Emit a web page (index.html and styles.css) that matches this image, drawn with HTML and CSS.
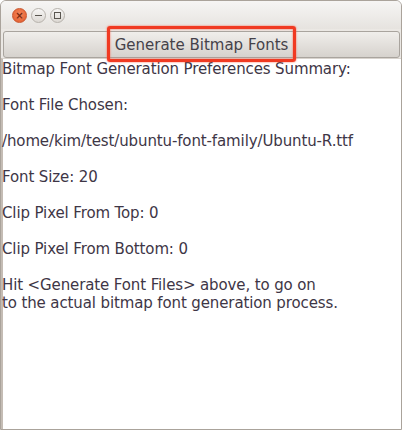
FILE: index.html
```html
<!DOCTYPE html>
<html>
<head>
<meta charset="utf-8">
<link rel="stylesheet" href="styles.css">
</head>
<body>
<div class="window">
  <div class="titlebar">
    <span class="wbtn close">×</span>
    <span class="wbtn min"><span class="dash"></span></span>
    <span class="wbtn max"><span class="sq"></span></span>
  </div>
  <div class="toolbar">
    <button class="gen"><span class="label">Generate Bitmap Fonts</span></button>
  </div>
  <div class="content">
    <p>Bitmap Font Generation Preferences Summary:</p>
    <p class="gap">Font File Chosen:</p>
    <p class="gap">/home/kim/test/ubuntu-font-family/Ubuntu-R.ttf</p>
    <p class="gap">Font Size: 20</p>
    <p class="gap">Clip Pixel From Top: 0</p>
    <p class="gap">Clip Pixel From Bottom: 0</p>
    <p class="gap">Hit &lt;Generate Font Files&gt; above, to go on<br>to the actual bitmap font generation process.</p>
  </div>
</div>
</body>
</html>
```
FILE: styles.css
```css
html, body {
  margin: 0;
  padding: 0;
  width: 402px;
  height: 430px;
  background: #ffffff;
  overflow: hidden;
}
.window {
  box-sizing: border-box;
  width: 402px;
  height: 430px;
  border: 1px solid #aaa39b;
  border-radius: 6px 6px 0 0;
  display: flex;
  flex-direction: column;
  background: #f2f1f0;
  overflow: hidden;
}
.titlebar {
  height: 28px;
  flex: none;
  display: flex;
  align-items: center;
  gap: 4px;
  padding: 1px 0 0 11px;
  box-sizing: border-box;
  background: linear-gradient(#f6f5f4, #e6e3df);
}
.wbtn {
  box-sizing: border-box;
  width: 15px;
  height: 15px;
  border-radius: 50%;
  display: flex;
  align-items: center;
  justify-content: center;
  border: 1px solid #b7b2ac;
  background: linear-gradient(#f7f6f5, #dcd8d3);
}
.close {
  background: radial-gradient(circle at 50% 40%, #f5875c, #e05a2a);
  border-color: #c9552d;
  color: #7a2a10;
  font: bold 10px "DejaVu Sans", sans-serif;
  line-height: 1;
}
.dash {
  width: 7px;
  height: 1px;
  background: #5a5650;
}
.sq {
  width: 5px;
  height: 5px;
  border: 1px solid #5a5650;
}
.toolbar {
  flex: none;
  padding: 2px 1px 0 2px;
  background: #ebe8e4;
}
.gen {
  box-sizing: border-box;
  width: 100%;
  height: 27px;
  border: 1px solid #a9a49e;
  border-radius: 3px;
  background: linear-gradient(#f0eeeb, #d6d2cd);
  padding: 0;
  display: flex;
  align-items: center;
  justify-content: center;
  font: 15px "DejaVu Sans", sans-serif;
  color: #45424a;
}
.label {
  position: relative;
  padding: 0 3px;
}
.label::after {
  content: "";
  position: absolute;
  left: -5px;
  right: -5px;
  top: -10px;
  bottom: -8px;
  border: 3px solid #f03a22;
  border-radius: 3px;
  box-shadow: 0 0 2px #ff5a40, inset 0 0 2px #ff5a40;
}
.content {
  flex: 1;
  background: #ffffff;
  border-left: 2px solid #c4bcb4;
  border-top: 1px solid #d8d3cd;
  padding: 1px 0 0 0;
  font: 15px "DejaVu Sans", sans-serif;
  line-height: 18px;
  letter-spacing: -0.12px;
  color: #3e3646;
}
.content p {
  margin: 0 0 0 -1px;
}
.content p.gap {
  margin-top: 18px;
}
```
